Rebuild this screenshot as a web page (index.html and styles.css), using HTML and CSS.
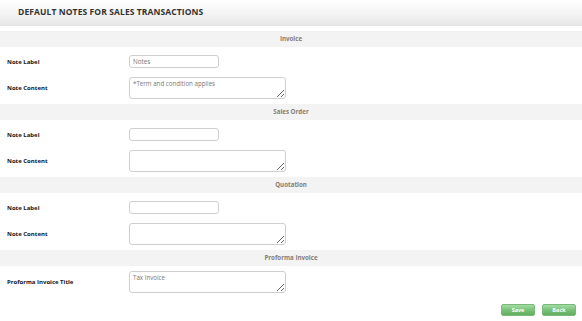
FILE: index.html
```html
<!DOCTYPE html>
<html lang="en">
<head>
  <meta charset="UTF-8">
  <meta name="viewport" content="width=device-width, initial-scale=1.0">
  <title>Default Notes</title>
  <link rel="stylesheet" href="styles.css">
</head>
<body>
  <div class="page-header">
    <h1>DEFAULT NOTES FOR SALES TRANSACTIONS</h1>
  </div>
  <div class="content">
    <div class="section">
      <div class="section-title">Invoice</div>
      <div class="row row-input">
        <label>Note Label</label>
        <input type="text" class="field-input" value="Notes">
      </div>
      <div class="row row-area">
        <label>Note Content</label>
        <textarea class="field-area">*Term and condition applies</textarea>
      </div>
    </div>
    <div class="section">
      <div class="section-title">Sales Order</div>
      <div class="row row-input">
        <label>Note Label</label>
        <input type="text" class="field-input">
      </div>
      <div class="row row-area">
        <label>Note Content</label>
        <textarea class="field-area"></textarea>
      </div>
    </div>
    <div class="section">
      <div class="section-title">Quotation</div>
      <div class="row row-input">
        <label>Note Label</label>
        <input type="text" class="field-input">
      </div>
      <div class="row row-area">
        <label>Note Content</label>
        <textarea class="field-area"></textarea>
      </div>
    </div>
    <div class="section last">
      <div class="section-title">Proforma Invoice</div>
      <div class="row row-proforma">
        <label>Proforma Invoice Title</label>
        <textarea class="field-area">Tax Invoice</textarea>
      </div>
    </div>
    <div class="actions">
      <button class="btn">Save</button>
      <button class="btn">Back</button>
    </div>
  </div>
</body>
</html>
```

FILE: styles.css
```css
body, html {
  margin: 0;
  padding: 0;
  background-color: #fff;
  font-family: "Open Sans", "Liberation Sans", sans-serif;
}

.page-header {
  height: 26px;
  background: linear-gradient(to bottom, #ffffff 0%, #f4f4f4 50%, #e6e6e6 100%);
  display: flex;
  align-items: center;
  padding-left: 18px;
  box-sizing: border-box;
}

.page-header h1 {
  margin: 0;
  font-size: 8.5px;
  font-weight: bold;
  color: #333;
  letter-spacing: 0.1px;
  padding-bottom: 4px;
}

.content {
  padding-top: 5px;
}

.section-title {
  height: 16px;
  line-height: 16px;
  background-color: #f3f3f3;
  text-align: center;
  font-size: 6.2px;
  font-weight: bold;
  color: #857c75;
}

.row {
  display: flex;
  align-items: center;
}

.row label {
  width: 122px;
  padding-left: 7px;
  font-size: 6px;
  font-weight: bold;
  color: #141420;
}

.row-input {
  padding-top: 8px;
}

.row-area {
  padding-top: 9px;
  padding-bottom: 5px;
}

.row-proforma {
  padding-top: 5px;
}

.field-input {
  width: 90px;
  height: 13px;
  box-sizing: border-box;
  border: 1px solid #cfcfcf;
  border-radius: 3px;
  padding: 0 3px;
  font-family: inherit;
  font-size: 6.3px;
  color: #777;
  outline: none;
}

.field-area {
  width: 157px;
  height: 22px;
  box-sizing: border-box;
  border: 1px solid #cfcfcf;
  border-radius: 3px;
  padding: 1px 3px;
  font-family: inherit;
  font-size: 6.2px;
  color: #777;
  margin: 0;
  outline: none;
}

.actions {
  display: flex;
  justify-content: flex-end;
  gap: 7px;
  padding-top: 11px;
  padding-right: 6px;
}

.btn {
  width: 34px;
  height: 12px;
  padding: 0;
  border: 1px solid #79b979;
  border-radius: 2px;
  background: linear-gradient(to bottom, #a5dca5 0%, #79c279 50%, #62ad62 100%);
  color: #fff;
  font-family: inherit;
  font-size: 5.5px;
  font-weight: bold;
  cursor: pointer;
}
```
